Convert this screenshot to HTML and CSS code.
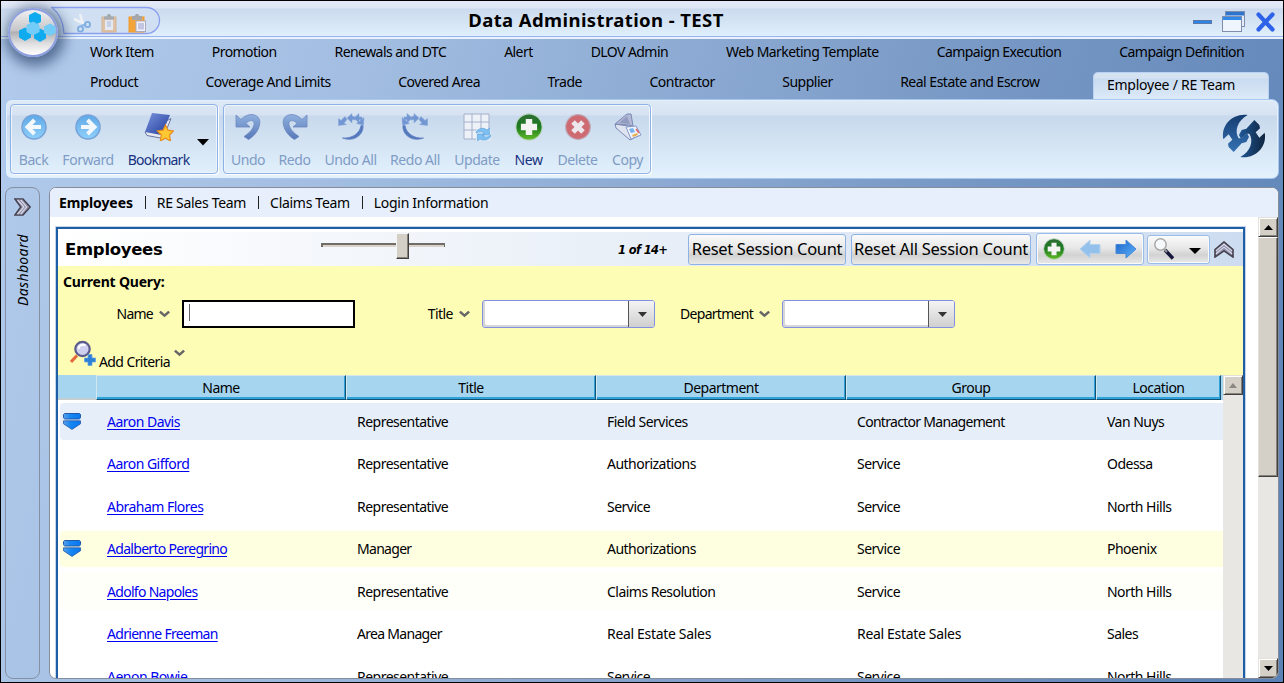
FILE: index.html
```html
<!DOCTYPE html>
<html lang="en">
<head>
<meta charset="utf-8">
<title>Data Administration - TEST</title>
<link rel="stylesheet" href="styles.css">
</head>
<body>
<svg class="defs" width="0" height="0">
  <defs>
    <linearGradient id="gBlue" x1="0" y1="0" x2="0" y2="1"><stop offset="0" stop-color="#5fa8e8"/><stop offset="1" stop-color="#8fd0fa"/></linearGradient>
    <linearGradient id="gGreen" x1="0" y1="0" x2="0" y2="1"><stop offset="0" stop-color="#2f6e35"/><stop offset=".5" stop-color="#1d7a20"/><stop offset="1" stop-color="#63bd27"/></linearGradient>
    <linearGradient id="gUndo" x1="0" y1="0" x2="0" y2="1"><stop offset="0" stop-color="#8fb0de"/><stop offset="1" stop-color="#5878ba"/></linearGradient>
    <linearGradient id="gBook" x1="0" y1="0" x2="1" y2="1"><stop offset="0" stop-color="#7a93dc"/><stop offset="1" stop-color="#1e3c9c"/></linearGradient>
    <linearGradient id="gArrow" x1="0" y1="0" x2="1" y2="1"><stop offset="0" stop-color="#1c62c4"/><stop offset="1" stop-color="#5cb4ff"/></linearGradient>
    <linearGradient id="gLogoL" x1="0" y1="0" x2="0" y2="1"><stop offset="0" stop-color="#143c70"/><stop offset="1" stop-color="#3672b4"/></linearGradient>
    <linearGradient id="gLogoR" x1="0" y1="0" x2="1" y2="0"><stop offset="0" stop-color="#1f5898"/><stop offset="1" stop-color="#10253f"/></linearGradient>
    <linearGradient id="gMark" x1="0" y1="0" x2="1" y2="0"><stop offset="0" stop-color="#58a0ea"/><stop offset=".4" stop-color="#1687f2"/><stop offset="1" stop-color="#0a78f0"/></linearGradient>
    <symbol id="mark" viewBox="0 0 18 17"><path d="M1.500.5h15l1 1v3l-1 1.500h-15L.5 4.500v-3z" fill="url(#gMark)" stroke="#2458a8"/><path d="M.5 7.800h17v3L9 16.400.5 10.800z" fill="url(#gMark)" stroke="#2458a8" stroke-width=".8"/></symbol>
    <symbol id="chev" viewBox="0 0 10 7"><path d="M.8 1.300 5 5l4.200-3.700" fill="none" stroke="#666" stroke-width="2.300"/></symbol>
    <symbol id="plus" viewBox="0 0 26 26"><circle cx="13" cy="13" r="12.200" fill="url(#gGreen)" stroke="#bcd8c4"/><path d="M10 5.500h6V10h4.500v6H16v4.500h-6V16H5.500v-6H10z" fill="#f4f4f2"/></symbol>
    <symbol id="dbl" viewBox="0 0 20 20"><path d="M1 1h9l8 9-8 9H1l6.500-9z" fill="#8e8fa8" stroke="#45404e" stroke-width="1.600"/><path d="M4 2l7 8-7 8M7.500 2l6.500 8-6.500 8" fill="none" stroke="#dcdcec" stroke-width="1.300"/></symbol>
  </defs>
</svg>

<div class="window">
  <header class="titlebar">
    <svg class="quick" width="164" height="32" viewBox="0 0 164 32">
      <path d="M52 2.500h95.500a13 13 0 0 1 0 26H65Q64 11 53 2.500z" fill="#d0e0f2" stroke="#8aa0ee" stroke-width="1.300"/>
    </svg>
    <svg class="quick-icons" width="76" height="22" viewBox="0 0 76 22">
      <path d="M1 6l11 5M7 1l3 10" stroke="#eef1f5" stroke-width="2.500" fill="none"/>
      <path d="M8 13l5-2" stroke="#8ebbe8" stroke-width="2"/>
      <circle cx="7.500" cy="16" r="2.600" fill="none" stroke="#80aee2" stroke-width="1.800"/><circle cx="14.500" cy="11.500" r="2.600" fill="none" stroke="#80aee2" stroke-width="1.800"/>
      <g opacity=".65"><rect x="29" y="4" width="14" height="15" fill="#e7b27d" stroke="#d59a62"/><rect x="32" y="7" width="8" height="10" fill="#eeeef6"/><path d="M34 9h4M34 11h4M34 13h4" stroke="#9aa3c8"/><path d="M31 3.500h2.500L35 1h2l1.500 2.500H41v3H31z" fill="#8f8f92"/></g>
      <rect x="56" y="4" width="15" height="15" fill="#f5a43a" stroke="#ec9a30"/><path d="M59 3h2.500l1.500-2h2l1.500 2H69v4H59z" fill="#a4a6a9"/><rect x="63" y="8" width="9.500" height="10.500" fill="#f2f3fa" stroke="#aab"/><rect x="65" y="10" width="6" height="6.500" fill="#c3c6e2"/>
    </svg>
    <h1>Data Administration - TEST</h1>
    <svg class="win-controls" width="84" height="26" viewBox="0 0 84 26">
      <rect x="1.500" y="12.500" width="18" height="3" fill="#2a86e6" stroke="#5f78a8"/>
      <rect x="33.500" y="3.500" width="19" height="15" fill="#e4edf9" stroke="#7e8cae"/><rect x="34" y="4" width="18" height="3.500" fill="#2d74cd"/>
      <rect x="30.500" y="8.500" width="19" height="15" fill="#eef5fc" stroke="#7e8cae"/><rect x="31" y="9" width="18" height="3" fill="#2d8ae6"/>
      <path d="M66.500 6.500l14 15M80.500 6.500l-14 15" stroke="#2e62e8" stroke-width="4.200" stroke-linecap="round"/>
    </svg>
    <div class="orb"><svg width="38" height="30" viewBox="0 0 38 30">
      <g fill="#10aaee"><path d="M17 0l6 3v7l-6 3-6-3V3z"/><path d="M7 15.500l6 3v7L7 29l-6-3.500v-7z"/><path d="M22 16.500l6 3v7L22 30l-6-3.500v-7z"/></g>
      <path d="M15 9.500l6.500 3.500v7L15 23.500 8.500 20v-7zM32 11.500l5.500 3v6.500L32 24l-6-3v-6.500z" fill="#72ccf8"/>
    </svg></div>
  </header>

  <nav class="tabs">
    <div class="tab-row"><a>Work Item</a><a>Promotion</a><a>Renewals and DTC</a><a>Alert</a><a>DLOV Admin</a><a>Web Marketing Template</a><a>Campaign Execution</a><a>Campaign Definition</a></div>
    <div class="tab-row second"><a>Product</a><a>Coverage And Limits</a><a>Covered Area</a><a>Trade</a><a>Contractor</a><a>Supplier</a><a>Real Estate and Escrow</a><a class="active">Employee / RE Team</a></div>
  </nav>

  <section class="ribbon">
    <div class="group nav-group">
      <div class="tool off"><svg width="28" height="28" viewBox="0 0 28 28"><circle cx="14" cy="14" r="12" fill="url(#gBlue)" stroke="#76a2d8" stroke-width="1.500"/><path d="M14.500 7 7.500 14l7 7M8 14h13" fill="none" stroke="#f3f8fd" stroke-width="4"/></svg><span>Back</span></div>
      <div class="tool off"><svg width="28" height="28" viewBox="0 0 28 28"><circle cx="14" cy="14" r="12" fill="url(#gBlue)" stroke="#76a2d8" stroke-width="1.500"/><path d="M13.500 7l7 7-7 7M20 14H7" fill="none" stroke="#f3f8fd" stroke-width="4"/></svg><span>Forward</span></div>
      <div class="tool mark-tool"><svg width="30" height="28" viewBox="0 0 30 28"><path d="M1 19l2 3.500 16 3 8-20z" fill="#e8e9ef" stroke="#6676a4"/><path d="M8 0l18 2-8.500 20L1 19z" fill="url(#gBook)"/><path d="M21.500 12l2.500 5.200 5.500.8-4 4 1 6-5-2.800-5.200 2.800 1-6-4-4 5.700-.8z" fill="#ffc832" stroke="#e88a1c" stroke-width="1.200"/></svg><span>Bookmark</span></div>
      <svg class="drop" width="12" height="7"><path d="M0 0h12L6 6.500z"/></svg>
    </div>
    <div class="group edit-group">
      <div class="tool off"><svg width="28" height="28" viewBox="0 0 28 28"><path d="M2 2l5 4.500C15-2 28 1 25.500 12 24 19 19 24 14.500 26.500L10 23.500c6-4 9-7.500 10-12 .8-5-5-5-8-1l4 3.500H2z" fill="url(#gUndo)" stroke="#6d88be" stroke-width=".8"/></svg><span>Undo</span></div>
      <div class="tool off"><svg width="28" height="28" viewBox="0 0 28 28"><path transform="matrix(-1 0 0 1 28 0)" d="M2 2l5 4.500C15-2 28 1 25.500 12 24 19 19 24 14.500 26.500L10 23.500c6-4 9-7.500 10-12 .8-5-5-5-8-1l4 3.500H2z" fill="url(#gUndo)" stroke="#6d88be" stroke-width=".8"/></svg><span>Redo</span></div>
      <div class="tool off"><svg width="28" height="28" viewBox="0 0 28 28"><g id="undoAll"><path d="M26 12.500c1 9-9 17-20.500 12.500C15 26 23 20 24 12.500z" fill="#5578bc" stroke="#5f82c4" stroke-width=".8"/><g fill="#7196d2" stroke="#86a5d8" stroke-width=".5"><path d="M1.500 5.500 4 7.500 8 3.500l2 3L7 10l2.500 1.500-8 1z"/><path d="M10 5l5-4.500V3l3 1v3l-3-.5V10z"/><path d="M17 5l5-4.500V4h3v3l-3-.5V10z"/><path d="M27 4.500l-.5 7.500-7-1.500z"/></g></g></svg><span>Undo All</span></div>
      <div class="tool off"><svg width="28" height="28" viewBox="0 0 28 28"><use href="#undoAll" transform="matrix(-1 0 0 1 28 0)"/></svg><span>Redo All</span></div>
      <div class="tool off"><svg width="28" height="28" viewBox="0 0 28 28"><path d="M1 1h25v25H1z" fill="#edf1f8" stroke="#a4afca"/><path d="M1 9h25M1 17h25M9 1v25M18 1v25" stroke="#a4b1cd"/><path d="M13 16h15v12H13z" fill="#d8e8f7"/><path d="M13 20c1-5 8-6 11-3l2.500-2v7H19l2-2c-3-2-5-1-8 0zM28 22c-1 5-8 6-11 4l-2.500 2v-7H22l-2 2c3 2 5 1 8-1z" fill="#7fc0f2" stroke="#5fa2dc" stroke-width=".6"/></svg><span>Update</span></div>
      <div class="tool"><svg width="28" height="28"><use href="#plus" x="0" y="0" width="28" height="28"/></svg><span>New</span></div>
      <div class="tool off"><svg width="28" height="28" viewBox="0 0 28 28"><circle cx="14" cy="14" r="12.300" fill="#ce6a72" stroke="#bfa7b2" stroke-width="1.200"/><path d="M9 9l10 10M19 9L9 19" stroke="#ebe7ec" stroke-width="5"/></svg><span>Delete</span></div>
      <div class="tool off"><svg width="28" height="28" viewBox="0 0 28 28"><path d="M1 11l13 2 12 9-10 5L2 15z" fill="#dfe4f1" stroke="#7b88b4"/><path d="M13 1h4l2 12-5-1L1 11z" fill="#b4bad6" stroke="#7b88b4"/><path d="M13 3l3 8-11-1z" fill="#929bc0"/><path d="M12 14l10-1 5 9-10 4z" fill="#eef3fc" stroke="#8898ca"/><path d="M15 16l4-1 2 4-4 1z" fill="#76b0ee"/><path d="M18 22l5-2 1 2-5 2z" fill="#eab04e"/><path d="M22 16l3 4" stroke="#d66" stroke-width="1.500"/></svg><span>Copy</span></div>
    </div>
    <svg class="logo" width="54" height="54" viewBox="0 0 162 162">
      <path id="blade" d="M95 18C50 12 14 48 22 91L38 76 49 92 36 104 38 114 53 129 77 103 91 99 99 84 93 72 84 80 78 88 68 88C54 65 65 35 95 18z" fill="url(#gLogoL)"/>
      <path d="M73 144C118 150 154 114 146 71L130 86 119 70 132 58 130 48 115 33 91 59 77 63 69 78 75 90 84 82 90 74 100 74C114 97 103 127 73 144z" fill="url(#gLogoR)"/>
    </svg>
  </section>

  <main class="workspace">
    <aside class="side"><svg width="18" height="20" viewBox="0 0 18 20"><use href="#dbl" width="18" height="20"/></svg><span>Dashboard</span></aside>
    <section class="content">
      <nav class="subtabs"><b>Employees</b><i></i><a>RE Sales Team</a><i></i><a>Claims Team</a><i></i><a>Login Information</a></nav>
      <div class="body">
        <div class="panel">
          <div class="panel-head">
            <h2>Employees</h2>
            <div class="slider"><span></span></div>
            <em class="count">1 of 14+</em>
            <button class="reset one">Reset Session Count</button>
            <button class="reset all">Reset All Session Count</button>
            <div class="btns nav-btns">
              <svg width="22" height="22"><use href="#plus" width="22" height="22"/></svg>
              <svg width="22" height="20" viewBox="0 0 22 20"><path d="M1 10 11 1v4.500h10v9H11V19z" fill="#93c1ec" stroke="#b4d2ee"/></svg>
              <svg width="22" height="20" viewBox="0 0 22 20"><path d="M21 10 11 1v4.500H1v9h10V19z" fill="url(#gArrow)" stroke="#4688d8"/></svg>
            </div>
            <div class="btns find-btns">
              <svg width="22" height="24" viewBox="0 0 22 24"><path d="M12 13l8 8.500" stroke="#17173d" stroke-width="3.500"/><path d="M10 11l4 4" stroke="#999" stroke-width="2"/><circle cx="7.500" cy="7.500" r="5.700" fill="#f6f8fa" stroke="#a8a8a8" stroke-width="1.500"/></svg>
              <svg width="12" height="7"><path d="M0 0h12L6 6z"/></svg>
            </div>
            <svg class="collapse" width="20" height="17" viewBox="0 0 20 18" preserveAspectRatio="none"><path d="M1 17V9l9-8 9 8v8l-9-6.500z" fill="#8e8fa8" stroke="#45404e" stroke-width="1.600"/><path d="M2 13.500l8-7 8 7M2 10.500l8-7 8 7" fill="none" stroke="#dcdcec" stroke-width="1.100"/></svg>
          </div>

          <div class="query">
            <b>Current Query:</b>
            <div class="fields">
              <label class="f1">Name</label><svg width="11" height="8"><use href="#chev" width="11" height="8"/></svg>
              <div class="input"><span></span></div>
              <label class="f2">Title</label><svg width="11" height="8"><use href="#chev" width="11" height="8"/></svg>
              <div class="combo"><span><svg width="9" height="5"><path d="M0 0h9L4.500 5z" fill="#333"/></svg></span></div>
              <label class="f3">Department</label><svg width="11" height="8"><use href="#chev" width="11" height="8"/></svg>
              <div class="combo"><span><svg width="9" height="5"><path d="M0 0h9L4.500 5z" fill="#333"/></svg></span></div>
            </div>
            <div class="add">
              <svg width="26" height="26" viewBox="0 0 26 26"><path d="M7 15.500 1 22" stroke="#e4683c" stroke-width="3"/><circle cx="12.500" cy="9" r="7.200" fill="#cfcff0" stroke="#5c5c8c" stroke-width="2.200"/><path d="M8.500 9a4.500 4.500 0 0 1 7-3.500" stroke="#fff" stroke-width="2" fill="none"/><path d="M18 14.500h4v3.500h3.500v4H22v3.500h-4V22h-3.500v-4H18z" fill="#2b7fd6" stroke="#6aa6e0" stroke-width=".8"/></svg>
              <span>Add Criteria</span>
              <svg class="add-chev" width="11" height="8"><use href="#chev" width="11" height="8"/></svg>
            </div>
          </div>

          <div class="grid">
            <div class="grid-main">
              <div class="thead"><span class="blank"></span><span>Name</span><span>Title</span><span>Department</span><span>Group</span><span>Location</span></div>
              <div class="row blue"><span><svg width="18" height="17"><use href="#mark"/></svg></span><a>Aaron Davis</a><span>Representative</span><span>Field Services</span><span class="tight">Contractor Management</span><span>Van Nuys</span></div>
              <div class="row"><span></span><a>Aaron Gifford</a><span>Representative</span><span>Authorizations</span><span>Service</span><span>Odessa</span></div>
              <div class="row"><span></span><a>Abraham Flores</a><span>Representative</span><span>Service</span><span>Service</span><span>North Hills</span></div>
              <div class="row yellow"><span><svg width="18" height="17"><use href="#mark"/></svg></span><a class="tight">Adalberto Peregrino</a><span class="tight">Manager</span><span>Authorizations</span><span>Service</span><span>Phoenix</span></div>
              <div class="row pale"><span></span><a class="tight">Adolfo Napoles</a><span>Representative</span><span>Claims Resolution</span><span>Service</span><span>North Hills</span></div>
              <div class="row"><span></span><a class="tight">Adrienne Freeman</a><span class="tight">Area Manager</span><span class="wide">Real Estate Sales</span><span class="wide">Real Estate Sales</span><span>Sales</span></div>
              <div class="row"><span></span><a>Aenon Bowie</a><span>Representative</span><span>Service</span><span>Service</span><span>North Hills</span></div>
            </div>
            <div class="grid-scroll"><div class="sb-btn"><svg width="8" height="5"><path d="M4 0l4 5H0z" fill="#8b8883"/></svg></div></div>
          </div>
        </div>
        <div class="page-scroll">
          <div class="sb-btn"><svg width="9" height="5"><path d="M4.500 0 9 5H0z"/></svg></div>
          <div class="thumb"></div>
          <div class="sb-btn end"><svg width="9" height="5"><path d="M0 0h9L4.500 5z"/></svg></div>
        </div>
      </div>
    </section>
  </main>
</div>
</body>
</html>
```

FILE: styles.css
```css
* { box-sizing: border-box; }
body { margin: 0; overflow: hidden; font: 14px/18px "Noto Sans", sans-serif; letter-spacing: -.52px; color: #000; }
svg { display: block; flex: none; }
h1, h2 { margin: 0; }
.defs { position: absolute; }

.window { display: flex; flex-direction: column; width: 1284px; height: 683px; border: 1px solid #000; overflow: hidden;
  background: linear-gradient(105deg, #b2cbec 0%, #a3bee2 25%, #7b9bc7 65%, #5b82b6 100%); }

/* title bar */
.titlebar { position: relative; display: flex; align-items: center; justify-content: center; flex: none; height: 38px;
  background: linear-gradient(#e6eaf8 0, #dce6f4 7px, #cbdaee 8px, #e0effb 35px); border-bottom: 2px solid #e8f1fc; box-shadow: inset 0 -1px #98b4f0; }
.titlebar h1 { font: bold 18.500px/24px "Noto Sans", sans-serif; letter-spacing: .4px; margin-left: -92px; padding-top: 2px; }
.quick { position: absolute; left: -2px; top: 4px; }
.quick-icons { position: absolute; left: 72px; top: 12px; }
.win-controls { position: absolute; right: 7px; top: 7px; }
.orb { position: absolute; z-index: 2; left: 7px; top: 7px; width: 50px; height: 49px; border-radius: 50%; border: 2px solid #8e9fe0; padding: 2px 0 0 8px;
  background: linear-gradient(#f0f0f2 0, #c6c6ca 46%, #aeb0b4 49%, #dfdfe1 75%, #fff 100%); box-shadow: 2px 4px 13px 5px rgba(35, 60, 100, .65); }

/* module tabs */
.tabs { height: 60px; flex: none; }
.tab-row { display: flex; justify-content: space-between; height: 30px; padding: 4px 39px 0 89px; letter-spacing: -.56px; white-space: nowrap; }
.tab-row.second { padding: 4px 14px 0 89px; letter-spacing: -.5px; }
.tab-row .active { width: 176px; height: 30px; margin: -1px 0 -4px -14px; padding: 3px 0 0 13px; letter-spacing: -.24px; border: 1px solid #b9d2f4; border-bottom: 0; border-radius: 5px 5px 0 0; background: linear-gradient(#d4e2f2 0, #d4e2f2 5px, #c9dbf0 6px, #dfecf9 100%); }

/* ribbon */
.ribbon { display: flex; flex: none; width: 1274px; height: 80px; margin-left: 4px; padding: 4px; gap: 5px; border: 1px solid #a6c8f0; border-radius: 7px;
  background: linear-gradient(#dfeaf7 0, #d6e2f1 15px, #c8d9ed 16px, #d4e4f3 45px, #e4f2fe 100%); box-shadow: inset 0 0 0 1px #e4effb; }
.group { display: grid; height: 70px; border: 1px solid #8eb2e6; border-radius: 4px; box-shadow: inset 0 0 0 1px #edf4fc, 1px 1px #fff; }
.nav-group { width: 208px; grid-template-columns: 45px 64px 77px 12px; }
.edit-group { width: 428px; grid-template-columns: 48px 45px 67px 62px 62px 41px 57px 43px; }
.tool { display: flex; flex-direction: column; align-items: center; padding-top: 8px; gap: 10px; color: #17327f; letter-spacing: -.45px; white-space: nowrap; }
.mark-tool { letter-spacing: -.75px; }
.off { color: #7f9cc5; }
.drop { margin: 34px 0 0; }
.logo { margin: 5px 4px 0 auto; }

/* lower workspace */
.workspace { display: flex; gap: 9px; height: 492px; margin: 8px 4px 0; }
.side { width: 35px; border: 1px solid #8590a2; border-radius: 8px; display: flex; flex-direction: column; align-items: center; padding-top: 9px; gap: 17px; }
.side span { writing-mode: vertical-rl; transform: rotate(180deg); font-style: italic; letter-spacing: .35px; }
.content { flex: 1; display: flex; flex-direction: column; border: 1px solid #858d9a; border-radius: 7px; background: #fff; overflow: hidden; }
.subtabs { display: flex; align-items: center; flex: none; height: 29px; padding: 0 0 0 9px; background: #e6effb; letter-spacing: -.3px; white-space: nowrap; }
.subtabs b { letter-spacing: -.1px; }
.subtabs i { width: 1px; height: 13px; margin: 0 11px 0 12px; background: #222; }
.body { display: flex; flex: 1; min-height: 0; justify-content: space-between; }
.panel { width: 1189px; margin: 10px 0 0 6px; border: 2px solid #1f5ea5; border-bottom: 0; box-shadow: 0 0 0 1px #c3d5eb; height: 460px; overflow: hidden; }
.panel-head { display: flex; align-items: center; height: 34px; margin-top: 3px; padding-left: 7px; background: linear-gradient(90deg, #fff, #e7eef7 52%, #cddcf0); white-space: nowrap; }
.panel-head h2 { width: 256px; padding-top: 2px; font: bold 16.500px/20px "DejaVu Sans", sans-serif; letter-spacing: -.3px; }
.slider { flex: none; width: 124px; height: 4px; margin-top: -9px; border: 1px solid #706c68; border-width: 2px 1px 0 2px; background: #d9d3cb; }
.slider span { display: block; width: 13px; height: 26px; margin: -12px 0 0 73px; background: #d4d0c8; border: 1px solid #404040; border-left-color: #f4f4f4; border-top-color: #f4f4f4; box-shadow: inset -1px -1px #85827c; }
.count { flex: none; width: 70px; margin-left: 173px; padding-top: 2px; font: italic bold 11.500px/18px "DejaVu Sans", sans-serif; letter-spacing: -.65px; }
.reset { flex: none; height: 31px; margin: 0 5px 0 0; padding: 0; border: 1px solid #8eb2e4; border-radius: 3px; font: 16.500px/22px "Noto Sans", sans-serif; letter-spacing: -.33px; color: #000; }
.reset, .btns { background: linear-gradient(#fafafa 0, #e8e8e8 45%, #d2d2d2 70%, #e9e9e9 100%); }
.one { width: 158px; }
.all { width: 180px; letter-spacing: -.26px; }
.btns { flex: none; display: flex; align-items: center; border: 1px solid #9abce8; border-radius: 3px; box-shadow: inset 0 0 0 1px #fafafa; }
.nav-btns { width: 108px; height: 32px; padding-left: 6px; gap: 14px; }
.find-btns { width: 63px; height: 29px; margin-left: 3px; padding-left: 5px; gap: 14px; }
.find-btns svg:last-child { margin-top: 5px; }
.collapse { margin-left: 4px; }

/* query area */
.query { height: 109px; padding: 7px 5px 0; background: #fefdb6; }
.query b { display: block; letter-spacing: -.2px; }
.fields { display: flex; align-items: center; height: 28px; margin-top: 9px; }
.fields label { text-align: right; margin-right: 6px; }
.fields svg { margin-right: -1px; }
.f1 { width: 90px; letter-spacing: -.75px; }
.f2 { width: 98px; }
.f3 { width: 98px; letter-spacing: -.72px; }
.input, .combo { width: 173px; height: 28px; margin-left: 13px; background: #fff; }
.input { border: 2px solid #000; padding: 2px 5px; }
.input span { display: block; width: 1px; height: 17px; background: #666; }
.combo { border: 1px solid #8290e2; border-radius: 3px; display: flex; justify-content: flex-end; box-shadow: inset 2px -2px #d6d6d6; }
.combo span { display: grid; place-items: center; width: 26px; border-left: 1px solid #555; background: linear-gradient(#f4f4f4, #cfcfcf); border-radius: 0 2px 2px 0; }
.add { display: flex; align-items: flex-start; margin: 12px 0 0 7px; }
.add span { margin: 13px 0 0 3px; letter-spacing: -.6px; }
.add-chev { margin: 9px 0 0 4px; }

/* results */
.grid { display: flex; height: 320px; }
.grid-main { width: 1165px; }
.thead, .row { display: grid; grid-template-columns: 38px 250px 250px 250px 250px 127px; align-items: center; }
.thead { grid-template-columns: 38px 250px 250px 250px 250px 125px 2px; height: 25px; margin-bottom: 3px; background: #a6d5ef; }
.thead span { height: 25px; padding-top: 3px; text-align: center; border-top: 1px solid #d8e8e9; border-left: 1px solid #d2e8f1; border-right: 1px solid #145273; border-bottom: 1px solid #145273; box-shadow: inset -1px -2px #2fa2da; }
.thead .blank { border: 0; box-shadow: inset 0 -2px #c5ced1; }
.row { height: 36.500px; margin: 0 0 6px 2px; border-radius: 4px 0 0 4px; white-space: nowrap; }
.row > :nth-child(n+2) { padding: 1px 0 0 9px; }
.row > :first-child { padding-left: 3px; }
.row a { color: #0000f0; text-decoration: underline; text-underline-offset: 2px; }
.row .tight { letter-spacing: -.7px; }
.row .wide { letter-spacing: -.32px; }
.blue { background: #e6eff9; }
.yellow { background: #feffe0; }
.pale { background: #fffffa; }
.grid-scroll { width: 20px; background: #e8e7e3; }
.sb-btn { display: grid; flex: none; place-items: center; height: 20px; background: #d4d0c8; border: 1px solid; border-color: #e4e1da #404040 #404040 #e4e1da; box-shadow: inset 1px 1px #fff, inset -1px -1px #85827c; }
.page-scroll { display: flex; flex-direction: column; width: 20px; background: #e8e7e3; }
.thumb { height: 240px; background: #d4d0c8; border: 1px solid; border-color: #fff #404040 #404040 #e4e1da; box-shadow: inset -1px -1px #85827c; }
.end { margin-top: auto; }
```
